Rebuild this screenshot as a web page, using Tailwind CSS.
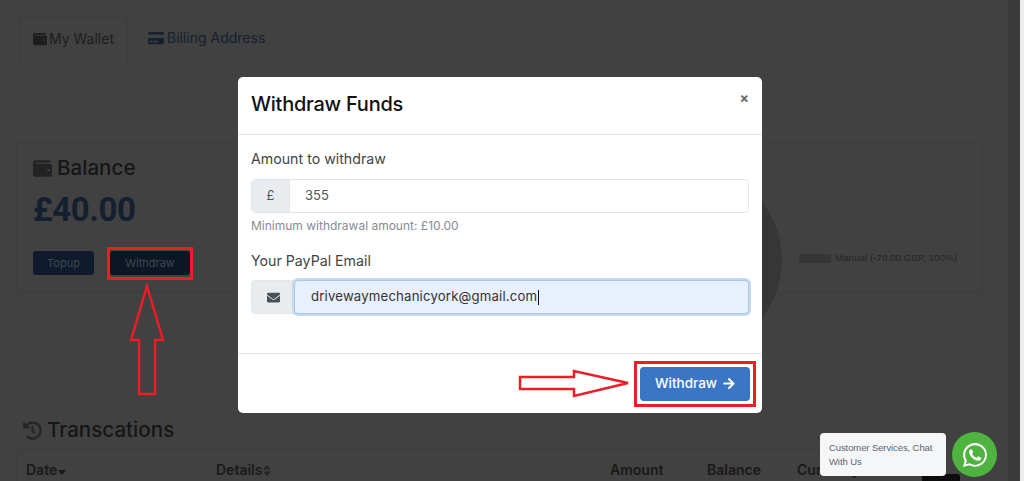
<!DOCTYPE html>
<html>
<head>
<meta charset="utf-8">
<script src="https://cdn.jsdelivr.net/npm/@tailwindcss/browser@4"></script>
</head>
<body class="relative h-[481px] w-[1024px] overflow-hidden bg-[#414141] font-['Inter',sans-serif]">
<div class="flex h-full">
  <main class="h-full w-[1008px] overflow-hidden pl-4 pr-[25px] pt-[17px]">
    <nav class="flex h-[45px] pl-[3px] text-[14px] leading-none">
      <div class="flex items-center gap-[2px] rounded-t border border-b-0 border-[#3c3c3c] px-[13px] pb-[3px] text-[#1d1d1d]">
        <svg class="h-[14px] w-[14px]" viewBox="0 0 512 512" fill="#1d1d1d"><path d="M461 128H80c-9 0-16-7-16-16s7-16 16-16h384c9 0 16-7 16-16 0-27-21-48-48-48H64C29 32 0 61 0 96v320c0 35 29 64 64 64h397c28 0 51-22 51-48V176c0-26-23-48-51-48zm-45 208c-18 0-32-14-32-32s14-32 32-32 32 14 32 32-14 32-32 32z"/></svg>
        <span>My Wallet</span>
      </div>
      <div class="flex items-center gap-[3px] px-5 pb-[3px] text-[#151f2f]">
        <svg class="h-[14px] w-[16px]" viewBox="0 0 576 512" fill="#151f2f"><path d="M0 432c0 26 22 48 48 48h480c26 0 48-22 48-48V256H0v176zm192-68c0-7 5-12 12-12h136c7 0 12 5 12 12v40c0 7-5 12-12 12H204c-7 0-12-5-12-12v-40zm-128 0c0-7 5-12 12-12h72c7 0 12 5 12 12v40c0 7-5 12-12 12H76c-7 0-12-5-12-12v-40zM576 80v48H0V80c0-26 22-48 48-48h480c26 0 48 22 48 48z"/></svg>
        <span>Billing Address</span>
      </div>
    </nav>
    <section class="mt-[80px] flex h-[151px] rounded border border-[#3c3c3c]">
      <div class="w-[340px] pl-4 pt-[11px]">
        <h2 class="flex items-center gap-[5px] text-[20.6px] leading-[28px] font-medium text-[#161616]">
          <svg class="h-[19px] w-[19px]" viewBox="0 0 512 512" fill="#232323"><path d="M461 128H80c-9 0-16-7-16-16s7-16 16-16h384c9 0 16-7 16-16 0-27-21-48-48-48H64C29 32 0 61 0 96v320c0 35 29 64 64 64h397c28 0 51-22 51-48V176c0-26-23-48-51-48zm-45 208c-18 0-32-14-32-32s14-32 32-32 32 14 32 32-14 32-32 32z"/></svg>
          Balance
        </h2>
        <p class="mt-[8px] font-['Roboto',sans-serif] text-[33px] leading-[40px] font-bold tracking-[-0.4px] text-[#141f30]">£40.00</p>
        <div class="mt-[21px] flex gap-[16px]">
          <span class="flex h-[24px] w-[61px] items-center justify-center rounded-[3px] bg-[#0f1b2c] text-[11px] text-[#3f4650]">Topup</span>
          <span class="flex h-[24px] w-[80px] items-center justify-center rounded-[3px] bg-[#0c1625] text-[11px] text-[#3f4650]">Withdraw</span>
        </div>
      </div>
      <div class="flex flex-1 items-start justify-end pr-[25px] pt-[109px]">
        <span class="mr-[4px] mt-[2px] h-[9px] w-[32px] bg-[#363636]"></span>
        <span class="font-['Liberation_Sans',sans-serif] text-[9.8px] leading-[12px] text-[#262626]">Manual (-70.00 GBP, 100%)</span>
      </div>
    </section>
    <h2 class="mt-[123px] flex items-center gap-[5px] pl-[7px] text-[20.6px] leading-[28px] font-medium text-[#161616]">
      <svg class="h-[19px] w-[19px]" viewBox="0 0 512 512" fill="#262626"><path d="M504 255c0 137-111 249-248 249-59 0-113-21-156-55a24 24 0 0 1-2-36l11-11c9-9 23-10 32-2a184 184 0 1 0-12-273l51 51c10 10 3 27-11 27H24c-9 0-16-7-16-16V44c0-14 17-21 27-11l49 49A248 248 0 0 1 256 8c137 0 248 110 248 247zM323 334l10-13c8-10 6-25-4-33l-41-32V152c0-13-11-24-24-24h-16c-13 0-24 11-24 24v136l65 50c11 8 26 6 34-4z"/></svg>
      Transcations
    </h2>
    <div class="mt-[5px] flex h-[40px] items-start rounded-t border border-[#3c3c3c] pl-[9px] pt-[11px] text-[14px] leading-[18px] font-semibold text-[#191919]">
      <span class="flex h-[18px] w-[190px] items-center gap-px">Date<svg class="mt-1 h-[5px] w-[8px]" viewBox="0 0 8 5" fill="#191919"><path d="M0 0h8L4 5z"/></svg></span>
      <span class="flex h-[18px] w-[394px] items-center gap-px">Details<svg class="h-[11px] w-[8px]" viewBox="0 0 8 11" fill="#262626"><path d="M0 4.500h8L4 0zM0 6.500h8L4 11z"/></svg></span>
      <span class="w-[97px]">Amount</span>
      <span class="w-[90px]">Balance</span>
      <span>Currency</span>
    </div>
  </main>
  <div class="h-full w-[12px] bg-[#3a3a3a]"></div>
  <div class="h-full flex-1 bg-[#ececec]"></div>
</div>

<!-- pie behind the modal, on the dimmed page -->
<div class="absolute left-[594px] top-[166px] h-[188px] w-[188px] rounded-full bg-[#363636]"></div>
<!-- dark button peeking out under the chat bubble -->
<div class="absolute left-[922px] top-[474px] h-[7px] w-[38px] rounded-t-[3px] bg-[#0c0c0c]"></div>

<!-- annotations on the page -->
<div class="absolute left-[107px] top-[247px] h-[33px] w-[86px] border-[3px] border-[#ee1c25]"></div>
<svg class="absolute left-[128px] top-[282px]" width="40" height="116" viewBox="0 0 40 116" fill="none" stroke="#ee1c25" stroke-width="2.500"><path d="M19 4 L35 58 L27 58 L27 112 L11 112 L11 58 L3 58 Z"/></svg>

<!-- modal -->
<div class="absolute left-[238px] top-[77px] flex h-[336px] w-[524px] flex-col rounded-[5px] bg-white">
  <header class="flex h-[58px] items-start justify-between border-b border-[#e5e7ea] px-[13px] pt-[13px]">
    <h3 class="text-[20px] leading-[28px] font-medium tracking-[-0.25px] text-[#111]">Withdraw Funds</h3>
    <span class="mt-[-2px] text-[14px] font-bold leading-[20px] text-[#6b6b6b]">×</span>
  </header>
  <div class="flex-1 px-[13px] pt-[14px]">
    <label class="block text-[14.2px] leading-[20px] text-[#444]">Amount to withdraw</label>
    <div class="mt-[10px] flex h-[34px] rounded border border-[#e3e6ea]">
      <span class="flex w-[38px] items-center justify-center border-r border-[#e3e6ea] bg-[#e9ecef] text-[13px] text-[#555]">£</span>
      <span class="flex flex-1 items-center pl-[15px] text-[13px] text-[#555]">355</span>
    </div>
    <p class="mt-[5px] text-[12px] leading-[16px] text-[#858c93]">Minimum withdrawal amount: £10.00</p>
    <label class="mt-[17px] block text-[14.2px] leading-[20px] text-[#444]">Your PayPal Email</label>
    <div class="mt-[9px] flex h-[34px] rounded border border-[#e3e6ea] bg-[#e9ecef]">
      <span class="flex w-[42px] items-center justify-center">
        <svg class="h-[13px] w-[13px]" viewBox="0 0 512 512" fill="#495057"><path d="M502 191c4-3 10 0 10 5v204c0 26-22 48-48 48H48c-26 0-48-22-48-48V196c0-5 6-8 10-5 22 17 52 39 154 113 21 15 57 48 92 48s71-33 92-48c102-74 132-96 154-113zM256 320c23 0 57-29 73-41 133-97 143-105 174-129 6-5 9-12 9-19v-19c0-26-22-48-48-48H48c-26 0-48 22-48 48v19c0 7 3 14 9 19 31 24 41 32 174 129 16 12 50 41 73 41z"/></svg>
      </span>
      <span class="-my-px -mr-px flex flex-1 items-center rounded border border-[#a9c8ea] bg-[#e8f0fe] pl-[16px] text-[13.200px] tracking-[0.17px] text-[#333] shadow-[0_0_0_2px_#c6d9ef]">drivewaymechanicyork@gmail.com<span class="ml-px h-[15px] w-px bg-[#111]"></span></span>
    </div>
  </div>
  <footer class="flex h-[60px] items-center justify-end border-t border-[#e5e7ea] pl-[13px] pr-3">
    <span class="flex h-[34px] w-[110px] items-center justify-center gap-[6px] rounded bg-[#3b76c4] pb-px text-[13.500px] font-medium text-white">Withdraw
      <svg class="h-[13px] w-[12px]" viewBox="0 0 448 512" fill="white"><path d="M190 70l22-22c10-9 25-9 34 0l194 194c9 9 9 25 0 34L246 470c-9 9-24 9-34 0l-22-22c-9-10-9-25 0-34l120-115H24c-13 0-24-11-24-24v-32c0-13 11-24 24-24h286L190 104c-9-9-10-24 0-34z"/></svg>
    </span>
  </footer>
</div>

<div class="absolute left-[634px] top-[361px] h-[46px] w-[122px] border-[3px] border-[#ee1c25]"></div>
<svg class="absolute left-[516px] top-[368px]" width="116" height="32" viewBox="0 0 116 32" fill="none" stroke="#ee1c25" stroke-width="2.500"><path d="M4 9 L58 9 L58 3 L112 15 L58 28 L58 21 L4 21 Z"/></svg>

<!-- whatsapp widget -->
<div class="absolute left-[820px] top-[433px] flex h-[43px] w-[126px] items-center whitespace-nowrap rounded-[4px] bg-[#f5f6f8] pl-[9px] font-['Liberation_Sans',sans-serif] text-[9.5px] leading-[14px] tracking-[-0.1px] text-[#5f6470]"><p>Customer Services, Chat<br>With Us</p></div>
<div class="absolute left-[952px] top-[432px] flex h-[45px] w-[45px] items-center justify-center rounded-full bg-[#4fb33f]">
  <svg class="h-[24px] w-[24px]" viewBox="0 0 24 24" fill="white"><path d="M17.500 14.400c-.3-.1-1.800-.9-2-1-.3-.1-.5-.1-.7.2-.2.3-.8 1-.9 1.100-.2.2-.3.2-.6.1-.3-.1-1.200-.5-2.400-1.500-.9-.8-1.500-1.800-1.600-2.100-.2-.3 0-.5.1-.6.1-.1.3-.3.4-.5.1-.2.2-.3.3-.5.1-.2 0-.4 0-.5-.1-.1-.7-1.600-.9-2.200-.2-.6-.5-.5-.7-.5h-.6c-.2 0-.5.1-.8.4-.3.3-1 1-1 2.500s1.100 2.900 1.200 3.100c.1.200 2.100 3.200 5.100 4.500.7.3 1.300.5 1.700.6.700.2 1.400.2 1.900.1.600-.1 1.800-.7 2-1.400.2-.7.2-1.300.2-1.400-.1-.1-.3-.2-.6-.3zM12 21.800h0c-1.800 0-3.500-.5-5-1.400l-.4-.2-3.700 1 1-3.600-.2-.4c-1-1.600-1.500-3.400-1.500-5.200 0-5.400 4.400-9.800 9.900-9.800 2.600 0 5.100 1 7 2.900 1.900 1.900 2.900 4.300 2.900 7 0 5.400-4.500 9.800-9.900 9.800zM20.400 3.500C18.200 1.300 15.200 0 12 0 5.500 0 .1 5.300.1 11.900c0 2.100.5 4.100 1.600 5.900L0 24l6.300-1.700c1.700.9 3.700 1.400 5.700 1.400h0c6.500 0 11.900-5.300 11.900-11.900 0-3.200-1.200-6.200-3.500-8.400z"/></svg>
</div>
</body>
</html>
